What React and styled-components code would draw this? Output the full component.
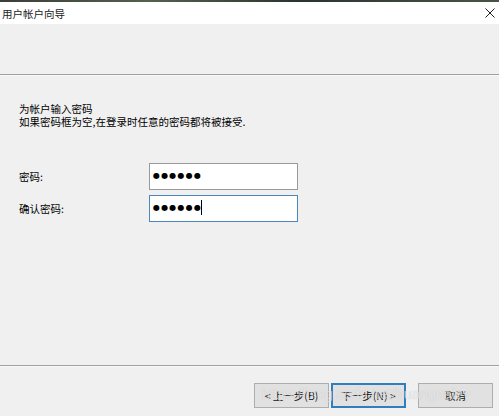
import React from 'react';
import styled, { createGlobalStyle } from 'styled-components';

const GlobalStyle = createGlobalStyle`
    html, body {
        margin: 0;
        padding: 0;
        background: #f0f0f0;
    }
    body {
        font-family: "Noto Sans CJK SC", "Liberation Sans", sans-serif;
        font-size: 10.5px;
        color: #000;
    }
`

const Frame = styled.div`
    width: 499px;
    height: 416px;
    display: flex;
    flex-direction: column;
    background: #f0f0f0;
    overflow: hidden;
    position: relative;
`

const Desktop = styled.div`
    height: 2px;
    background: linear-gradient(90deg, #3a3f38 0%, #56604e 30%, #2c332f 60%, #4a5446 100%);
`

const TitleBar = styled.div`
    height: 22px;
    background: #fff;
    display: flex;
    align-items: center;
    justify-content: space-between;
    padding: 0 4px 0 2px;
`

const Title = styled.span`
    font-size: 10.5px;
    color: #1a1a1a;
`

const CloseButton = styled.svg`
    width: 10px;
    height: 10px;
`

const Header = styled.div`
    height: 50px;
`

const Separator = styled.div`
    height: 1px;
    background: #a0a0a0;
    border-bottom: 1px solid #f8f8f8;
`

const Body = styled.div`
    flex: 1;
    padding: 26px 0 0 19px;
    display: flex;
    flex-direction: column;
`

const Intro = styled.div`
    line-height: 13px;
`

const Form = styled.div`
    margin-top: 35px;
    display: grid;
    grid-template-columns: 130px 149px;
    grid-auto-rows: 27px;
    row-gap: 5px;
    align-items: center;
`

const Label = styled.span`
    line-height: 14px;
`

const Field = styled.div`
    box-sizing: border-box;
    height: 27px;
    background: #fff;
    border: 1px solid ${p => (p.focused ? '#4a87bd' : '#9a9a9a')};
    display: flex;
    align-items: center;
    padding: 0 0 2px 3px;
`

const Dots = styled.span`
    font-family: "DejaVu Sans", sans-serif;
    font-size: 8px;
    letter-spacing: 1.2px;
    line-height: 10px;
`

const Caret = styled.span`
    width: 1px;
    height: 15px;
    background: #000;
    margin-left: -1px;
`

const ButtonBar = styled.div`
    height: 49px;
    box-sizing: border-box;
    padding: 16px 5px 0 254px;
    display: flex;
    align-items: flex-start;
`

const Button = styled.div`
    box-sizing: border-box;
    width: 75px;
    height: 25px;
    margin-right: ${p => p.gap || 0}px;
    background: #e1e1e1;
    border: 1px solid ${p => (p.primary ? '#2f7fc0' : '#adadad')};
    box-shadow: ${p => (p.primary ? 'inset 0 0 0 1px #2f7fc0' : 'none')};
    display: flex;
    align-items: center;
    justify-content: center;
    font-size: 10.5px;
    color: #111;
`

const Watermark = styled.div`
    position: absolute;
    left: 262px;
    top: 386px;
    font-family: "Liberation Sans", sans-serif;
    font-size: 14.5px;
    color: rgba(255, 255, 255, 0.55);
    text-shadow: 0 0 1px rgba(120, 120, 120, 0.35);
    white-space: nowrap;
    pointer-events: none;
`

export default function App() {
    return (
        <Frame>
            <GlobalStyle />
            <Desktop />
            <TitleBar>
                <Title>用户帐户向导</Title>
                <CloseButton viewBox="0 0 10 10">
                    <path d="M0.5 0.5 L9.5 9.5 M9.5 0.5 L0.5 9.5" stroke="#222" strokeWidth="1" />
                </CloseButton>
            </TitleBar>
            <Header />
            <Separator />
            <Body>
                <Intro>
                    为帐户输入密码<br />
                    如果密码框为空,在登录时任意的密码都将被接受.
                </Intro>
                <Form>
                    <Label>密码:</Label>
                    <Field>
                        <Dots>●●●●●●</Dots>
                    </Field>
                    <Label>确认密码:</Label>
                    <Field focused>
                        <Dots>●●●●●●</Dots>
                        <Caret />
                    </Field>
                </Form>
            </Body>
            <Separator />
            <ButtonBar>
                <Button gap={2}>&lt; 上一步(B)</Button>
                <Button primary gap={12}>下一步(N) &gt;</Button>
                <Button>取消</Button>
            </ButtonBar>
            <Watermark>https://blog.csdn.net/huangsaley</Watermark>
        </Frame>
    );
}
